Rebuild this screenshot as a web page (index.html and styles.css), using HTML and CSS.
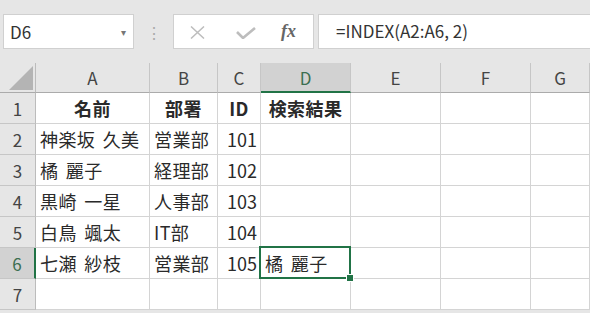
FILE: index.html
```html
<!DOCTYPE html>
<html lang="ja">
<head>
    <meta charset="UTF-8">
    <title>INDEX</title>
    <link rel="stylesheet" href="styles.css">
</head>
<body>
    <div class="toolbar">
        <div class="name-box">
            <span>D6</span>
            <span class="drop">&#9662;</span>
        </div>
        <div class="grip">&#8942;</div>
        <div class="fx-box">
            <svg class="icon-x" width="15" height="13" viewBox="0 0 15 13"><path d="M1 0.5 L14 12.5 M14 0.5 L1 12.5" stroke="#bdbdbd" stroke-width="1.5" fill="none"/></svg>
            <svg class="icon-ok" width="20" height="12" viewBox="0 0 20 12"><path d="M1 5 L7 11 L19 1" stroke="#bdbdbd" stroke-width="2.6" fill="none"/></svg>
            <span class="fx">fx</span>
        </div>
        <div class="formula">=INDEX(A2:A6, 2)</div>
    </div>
    <div class="sheet">
        <div class="corner"><div class="tri"></div></div>
        <div class="ch">A</div>
        <div class="ch">B</div>
        <div class="ch">C</div>
        <div class="ch sel">D</div>
        <div class="ch">E</div>
        <div class="ch">F</div>
        <div class="ch">G</div>

        <div class="rh">1</div>
        <div class="cell head">名前</div>
        <div class="cell head">部署</div>
        <div class="cell head">ID</div>
        <div class="cell head">検索結果</div>
        <div class="cell"></div>
        <div class="cell"></div>
        <div class="cell"></div>

        <div class="rh">2</div>
        <div class="cell">神楽坂 久美</div>
        <div class="cell">営業部</div>
        <div class="cell num">101</div>
        <div class="cell"></div>
        <div class="cell"></div>
        <div class="cell"></div>
        <div class="cell"></div>

        <div class="rh">3</div>
        <div class="cell">橘 麗子</div>
        <div class="cell">経理部</div>
        <div class="cell num">102</div>
        <div class="cell"></div>
        <div class="cell"></div>
        <div class="cell"></div>
        <div class="cell"></div>

        <div class="rh">4</div>
        <div class="cell">黒崎 一星</div>
        <div class="cell">人事部</div>
        <div class="cell num">103</div>
        <div class="cell"></div>
        <div class="cell"></div>
        <div class="cell"></div>
        <div class="cell"></div>

        <div class="rh">5</div>
        <div class="cell">白鳥 颯太</div>
        <div class="cell">IT部</div>
        <div class="cell num">104</div>
        <div class="cell"></div>
        <div class="cell"></div>
        <div class="cell"></div>
        <div class="cell"></div>

        <div class="rh sel">6</div>
        <div class="cell">七瀬 紗枝</div>
        <div class="cell">営業部</div>
        <div class="cell num">105</div>
        <div class="cell active">橘 麗子</div>
        <div class="cell"></div>
        <div class="cell"></div>
        <div class="cell"></div>

        <div class="rh">7</div>
        <div class="cell"></div>
        <div class="cell"></div>
        <div class="cell"></div>
        <div class="cell"></div>
        <div class="cell"></div>
        <div class="cell"></div>
        <div class="cell"></div>
    </div>
</body>
</html>
```

FILE: styles.css
```css
body {
    margin: 0;
    background-color: #e6e6e6;
    font-family: "Noto Sans CJK JP", "Liberation Sans", sans-serif;
    color: #222;
    overflow: hidden;
}
.toolbar {
    display: flex;
    height: 63px;
    padding: 14px 0 0 3px;
    box-sizing: border-box;
}
.name-box {
    width: 131px;
    height: 35px;
    box-sizing: border-box;
    background-color: white;
    border: 1px solid #d0d0d0;
    display: flex;
    align-items: center;
    justify-content: space-between;
    padding: 0 7px 0 6px;
    font-size: 17px;
    color: #333;
}
.name-box .drop {
    font-size: 10px;
    color: #777;
}
.grip {
    width: 39px;
    height: 35px;
    display: flex;
    align-items: center;
    justify-content: center;
    color: #aaa;
    font-size: 16px;
}
.fx-box {
    width: 141px;
    height: 35px;
    box-sizing: border-box;
    background-color: white;
    border: 1px solid #d0d0d0;
    display: flex;
    align-items: center;
    padding-left: 16px;
}
.icon-x {
    margin-top: 1px;
}
.icon-ok {
    margin-left: 31px;
    margin-top: 3px;
}
.fx {
    margin-left: 25px;
    font-family: "Liberation Serif", serif;
    font-style: italic;
    font-weight: bold;
    font-size: 18px;
    color: #666;
}
.formula {
    flex: 1;
    height: 35px;
    box-sizing: border-box;
    margin-left: 4px;
    background-color: white;
    border: 1px solid #d0d0d0;
    border-right: none;
    padding-left: 17px;
    font-size: 17px;
    line-height: 32px;
    color: #333;
}
.sheet {
    display: grid;
    grid-template-columns: 36px 114px 68px 43px 90px 90px 90px 59px;
    grid-template-rows: 30px repeat(7, 31px);
    background-color: white;
}
.corner {
    background-color: #e6e6e6;
    border-right: 1px solid #bcbcbc;
    border-bottom: 1px solid #ababab;
    position: relative;
}
.tri {
    position: absolute;
    right: 2px;
    bottom: 2px;
    width: 24px;
    height: 24px;
    background-color: #b4b4b4;
    clip-path: polygon(100% 0, 100% 100%, 0 100%);
}
.ch {
    background-color: #e6e6e6;
    border-right: 1px solid #c6c6c6;
    border-bottom: 1px solid #ababab;
    display: flex;
    align-items: center;
    justify-content: center;
    font-size: 17px;
    color: #444;
}
.ch.sel {
    background-color: #d2d2d2;
    border-bottom: 2px solid #217346;
    color: #3c6e51;
}
.rh {
    background-color: #e6e6e6;
    border-right: 1px solid #bcbcbc;
    border-bottom: 1px solid #c6c6c6;
    display: flex;
    align-items: center;
    justify-content: center;
    font-size: 17px;
    color: #444;
}
.rh.sel {
    background-color: #d2d2d2;
    border-right: 2px solid #217346;
    color: #3c6e51;
}
.cell {
    border-right: 1px solid #d4d4d4;
    border-bottom: 1px solid #d4d4d4;
    display: flex;
    align-items: center;
    padding: 0 4px;
    font-size: 18px;
    letter-spacing: 0.4px;
    word-spacing: 3px;
    white-space: nowrap;
    color: #2a2a2a;
}
.cell.head {
    justify-content: center;
    font-weight: bold;
}
.cell.num {
    justify-content: flex-end;
    padding-right: 3px;
    letter-spacing: 0;
}
.cell.active {
    position: relative;
}
.cell.active::before {
    content: "";
    position: absolute;
    left: -2px;
    top: -2px;
    right: -1px;
    bottom: -1px;
    border: 2px solid #217346;
}
.cell.active::after {
    content: "";
    position: absolute;
    right: -4px;
    bottom: -4px;
    width: 6px;
    height: 6px;
    background-color: #217346;
    border: 1px solid white;
}
```
